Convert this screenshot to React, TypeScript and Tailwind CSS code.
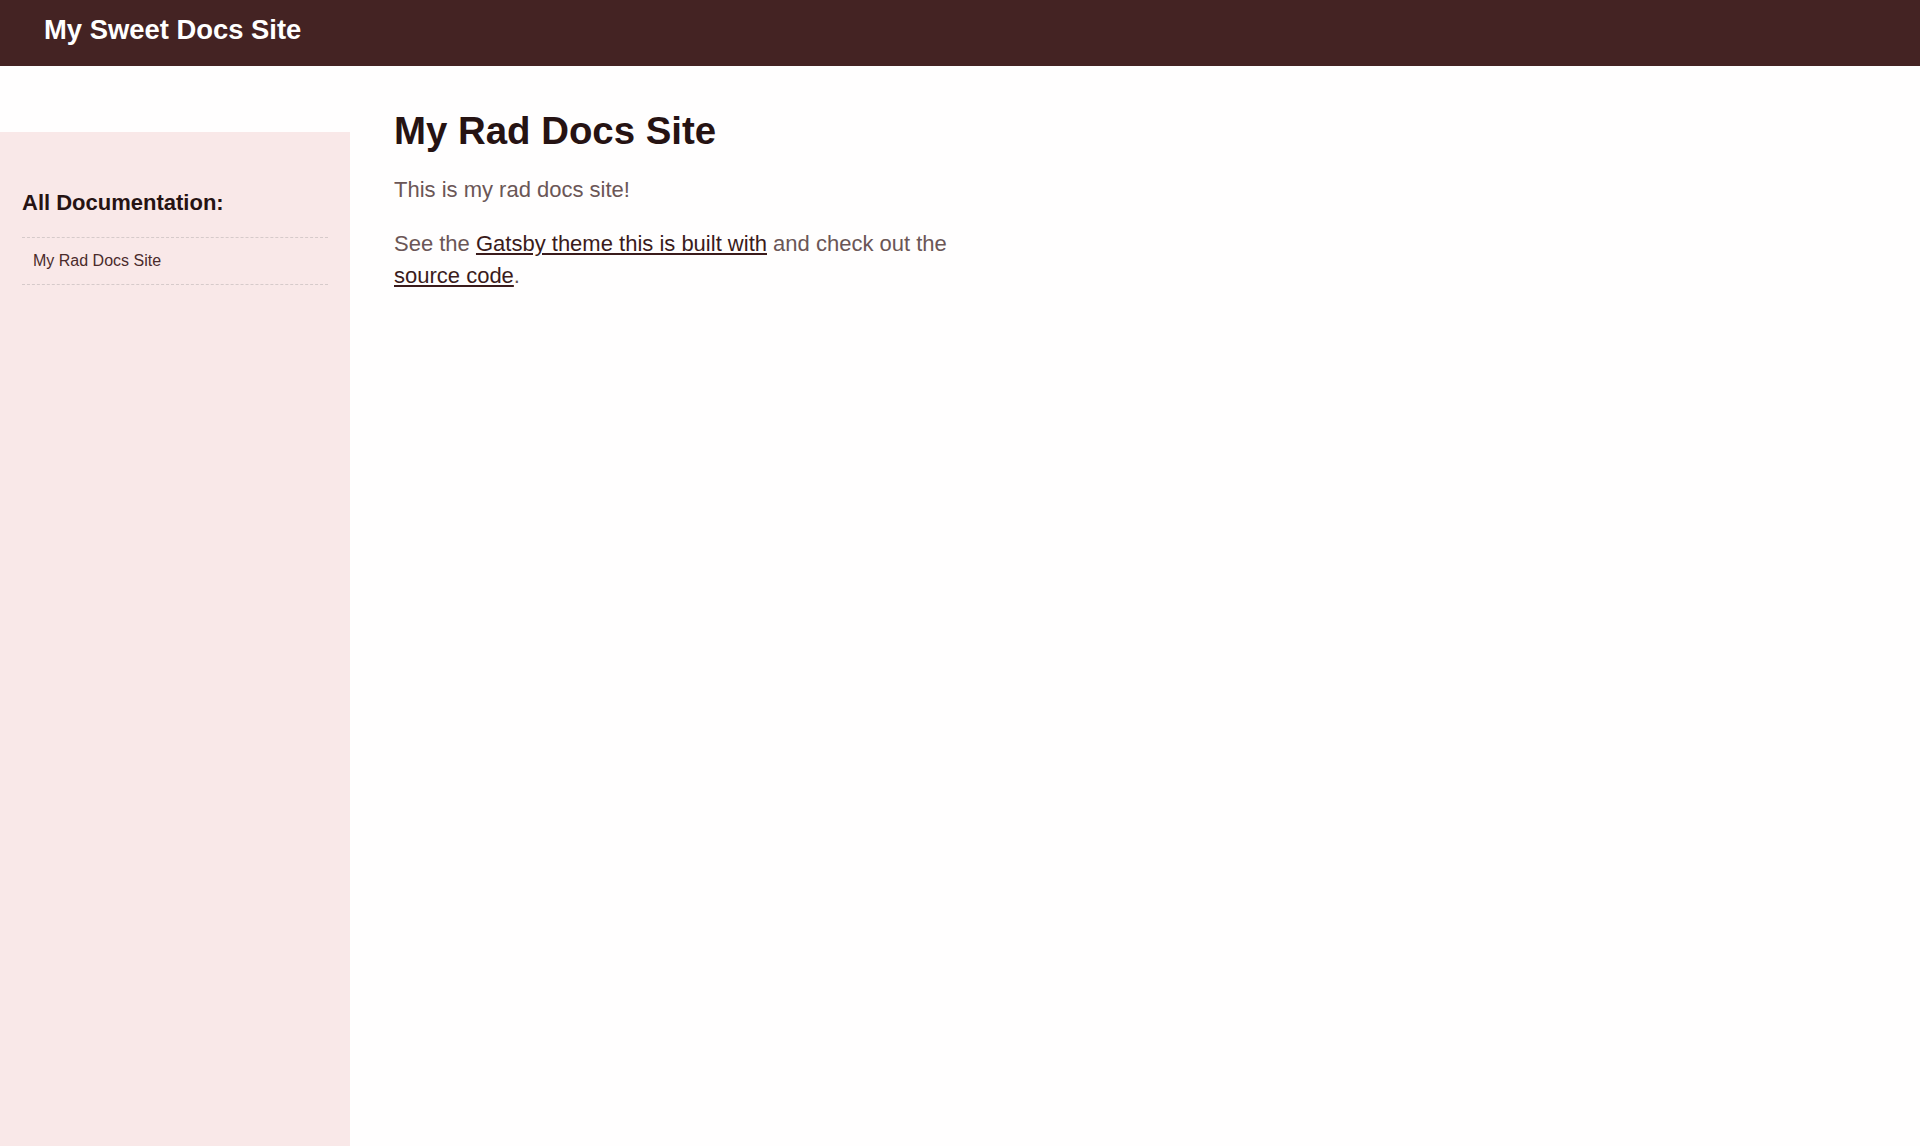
export default function App() {
  return (
    <div className="min-h-screen bg-[#fffefe] font-['Liberation_Sans',Arial,sans-serif]">
      <header className="h-[66px] bg-[#442323] pl-[44px] pt-[14px]">
        <a href="#" className="block text-[27.4px] leading-[1.2] font-bold text-white">
          My Sweet Docs Site
        </a>
      </header>

      <div className="flex">
        <aside className="mt-[66px] min-h-[1014px] w-[350px] shrink-0 bg-[#f9e8e8] px-[22px] pt-[55px]">
          <h3 className="mb-[18px] text-[22px] leading-[32px] font-bold text-[#261313]">
            All Documentation:
          </h3>
          <ul className="border-t border-dashed border-[#d6caca]">
            <li className="border-b border-dashed border-[#d6caca]">
              <a href="#" className="block py-[11px] pl-[11px] text-[16px] leading-[24px] text-[#4a2b2b]">
                My Rad Docs Site
              </a>
            </li>
          </ul>
        </aside>

        <main className="pl-[44px]">
          <div className="mt-[42px] max-w-[600px]">
            <h1 className="text-[38.4px] leading-[1.2] font-bold text-[#261313]">My Rad Docs Site</h1>
            <p className="mt-[20px] text-[22px] leading-[32px] text-[#6b5656]">This is my rad docs site!</p>
            <p className="mt-[22px] text-[22px] leading-[32px] text-[#6b5656]">
              See the{' '}
              <a href="#" className="text-[#3a1b1b] underline">
                Gatsby theme this is built with
              </a>{' '}
              and check out the{' '}
              <a href="#" className="text-[#3a1b1b] underline">
                source code
              </a>
              .
            </p>
          </div>
        </main>
      </div>
    </div>
  )
}
